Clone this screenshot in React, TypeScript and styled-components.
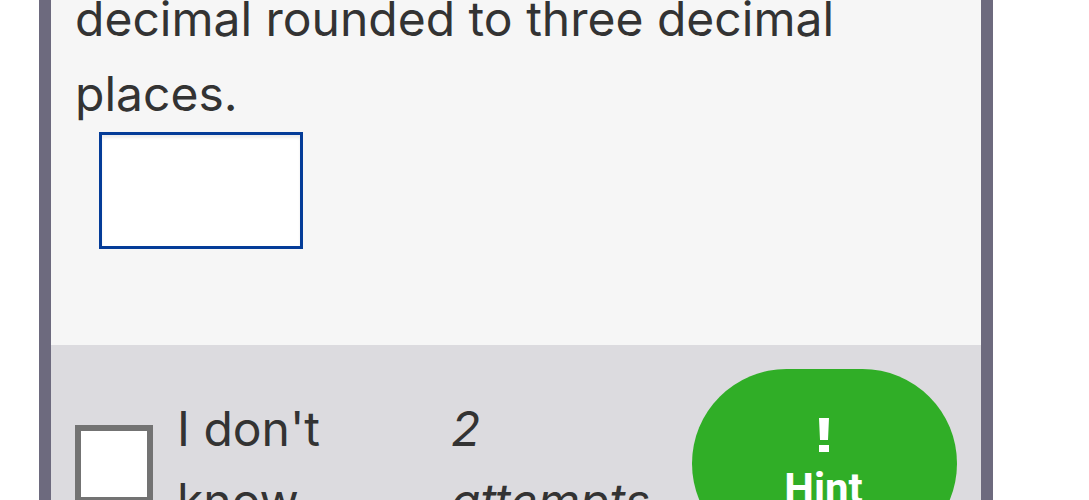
import React from "react";
import styled, { createGlobalStyle } from "styled-components";

const GlobalStyle = createGlobalStyle`
  * {
    box-sizing: border-box;
  }
  html {
    height: 100%;
  }
  body {
    margin: 0;
    height: 100%;
    overflow: hidden;
    background: #ffffff;
    color: #333333;
    font-family: Inter, "Liberation Sans", sans-serif;
    font-size: 48px;
  }
`;

const Card = styled.main`
  margin: -19px 96px 0 39px;
  border: solid #6d6a7e;
  border-width: 0 12px;
`;

const Question = styled.section`
  padding: 0 24px 96px;
  background: #f6f6f6;
`;

const Prompt = styled.label`
  display: block;
  padding-bottom: 1px;
  line-height: 75px;
`;

const AnswerInput = styled.input`
  display: block;
  width: 204px;
  height: 117px;
  margin: 0 24px;
  padding: 12px 24px;
  border: 3px solid #043c98;
  border-radius: 0;
  outline: none;
  background: #ffffff;
  box-shadow: inset 0 3px 3px rgba(0, 0, 0, 0.075);
  color: inherit;
  font: inherit;
`;

const Footer = styled.footer`
  display: grid;
  grid-template-columns: minmax(0, 376px) minmax(0, 1fr) 265px;
  align-items: center;
  padding: 24px;
  background: #dcdbdf;
  line-height: 72px;
`;

const SkipOption = styled.label`
  display: flex;
  align-items: center;
  gap: 24px;
`;

const SkipText = styled.span`
  max-width: 180px;
  padding-top: 2px;
`;

const Checkbox = styled.input`
  appearance: none;
  flex: none;
  width: 78px;
  height: 78px;
  margin: 0;
  border: 6px solid #737373;
  background: #ffffff;

  &:checked {
    background: #737373;
    box-shadow: inset 0 0 0 12px #ffffff;
  }
`;

const Attempts = styled.em`
  max-width: 210px;
  padding-top: 2px;
  font-style: oblique 10deg;
`;

const HintButton = styled.button`
  display: flex;
  flex-direction: column;
  align-items: center;
  gap: 12px;
  height: 189px;
  padding: 48px 26px 0 24px;
  border: 0;
  border-radius: 95px;
  background: #30ae27;
  color: #ffffff;
  font: bold 42px/48px Roboto, "Liberation Sans", sans-serif;
  cursor: pointer;
`;

const HintIcon = styled.svg`
  flex: none;
  width: 12px;
  height: 36px;
  fill: currentColor;
`;

export default function App() {
  return (
    <>
      <GlobalStyle />
      <Card>
        <Question>
          <Prompt htmlFor="answer">decimal rounded to three decimal places.</Prompt>
          <AnswerInput id="answer" type="text" autoComplete="off" />
        </Question>
        <Footer>
          <SkipOption>
            <Checkbox type="checkbox" />
            <SkipText>I don't know</SkipText>
          </SkipOption>
          <Attempts>2 attempts</Attempts>
          <HintButton type="button">
            <HintIcon viewBox="0 0 12 36" aria-hidden="true">
              <path d="M1 1H11L10 23H2Z M1 28H11V35H1Z" />
            </HintIcon>
            Hint
          </HintButton>
        </Footer>
      </Card>
    </>
  );
}
